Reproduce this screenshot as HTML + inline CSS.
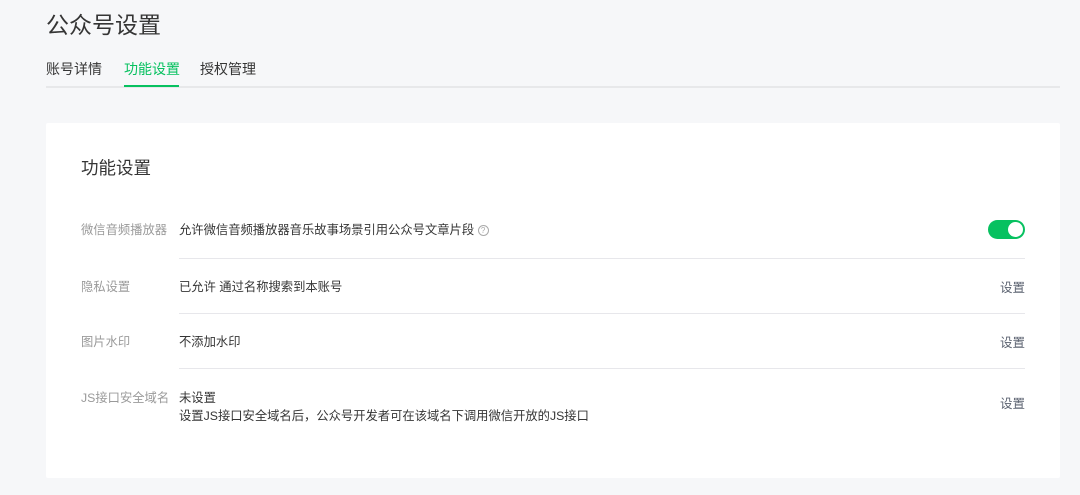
<!DOCTYPE html><html><head><meta charset="utf-8"><style>
body{margin:0;width:1080px;height:495px;background:#f6f7f9;font-family:"Liberation Sans","Noto Sans CJK SC",sans-serif;position:relative;overflow:hidden;color:#353535}
.a{position:absolute;white-space:nowrap}
.l{font-size:12.3px;color:#9a9a9a;left:81px}
.v{font-size:12.3px;color:#353535;left:179px}
.s{font-size:12.5px;color:#5b6270;right:55px}
.hr{position:absolute;left:179px;width:846px;height:1px;background:#e7e7eb}
</style></head><body>
<div class="a" style="left:46px;top:6px;font-size:23px;color:#353535">公众号设置</div>
<div class="a" style="left:46px;top:59px;font-size:14px">账号详情</div>
<div class="a" style="left:124px;top:59px;font-size:14px;color:#07c160">功能设置</div>
<div class="a" style="left:200px;top:59px;font-size:14px">授权管理</div>
<div class="a" style="left:46px;top:86px;width:1014px;height:2px;background:#e7e8ea"></div>
<div class="a" style="left:124px;top:85px;width:55px;height:2px;background:#07c160"></div>
<div class="a" style="left:46px;top:123px;width:1014px;height:355px;background:#fff;border-radius:2px"></div>
<div class="a" style="left:81px;top:155px;font-size:17.5px">功能设置</div>
<div class="a l" style="top:220px">微信音频播放器</div>
<div class="a v" style="top:220px">允许微信音频播放器音乐故事场景引用公众号文章片段 <span style="display:inline-block;width:9px;height:9px;border:1px solid #aaa;border-radius:50%;font-size:8px;line-height:9px;text-align:center;color:#aaa;vertical-align:1px">?</span></div>
<div class="a" style="left:988px;top:220px;width:37px;height:19px;border-radius:10px;background:#07c160"><div style="position:absolute;right:2px;top:2px;width:15px;height:15px;border-radius:50%;background:#fff"></div></div>
<div class="hr" style="top:258px"></div>
<div class="a l" style="top:277px">隐私设置</div>
<div class="a v" style="top:277px">已允许 通过名称搜索到本账号</div>
<div class="a s" style="top:277px">设置</div>
<div class="hr" style="top:313px"></div>
<div class="a l" style="top:332px">图片水印</div>
<div class="a v" style="top:332px">不添加水印</div>
<div class="a s" style="top:332px">设置</div>
<div class="hr" style="top:368px"></div>
<div class="a l" style="top:388px">JS接口安全域名</div>
<div class="a v" style="top:388px">未设置</div>
<div class="a v" style="top:406px">设置JS接口安全域名后，公众号开发者可在该域名下调用微信开放的JS接口</div>
<div class="a s" style="top:393px">设置</div>
</body></html>
